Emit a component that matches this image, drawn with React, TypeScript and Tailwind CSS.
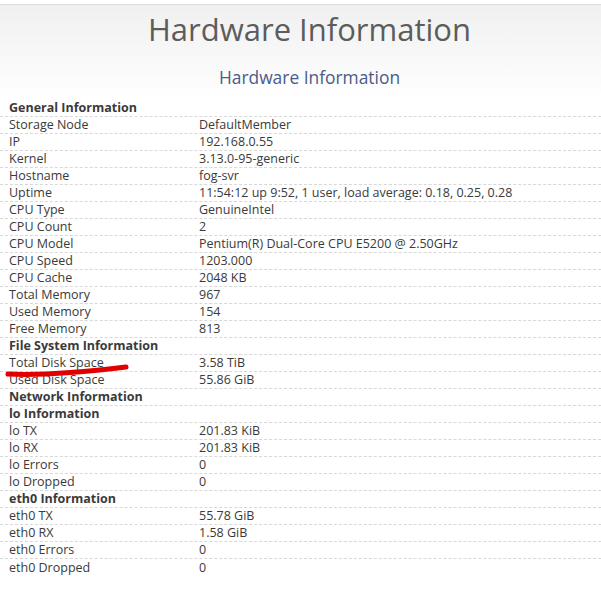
// Hardware Information — FOG server info page
import React from 'react'

type Row = { label: string; value?: string; head?: boolean }

const ROWS: Row[] = [
  { label: 'General Information', head: true },
  { label: 'Storage Node', value: 'DefaultMember' },
  { label: 'IP', value: '192.168.0.55' },
  { label: 'Kernel', value: '3.13.0-95-generic' },
  { label: 'Hostname', value: 'fog-svr' },
  { label: 'Uptime', value: '11:54:12 up 9:52, 1 user, load average: 0.18, 0.25, 0.28' },
  { label: 'CPU Type', value: 'GenuineIntel' },
  { label: 'CPU Count', value: '2' },
  { label: 'CPU Model', value: 'Pentium(R) Dual-Core CPU E5200 @ 2.50GHz' },
  { label: 'CPU Speed', value: '1203.000' },
  { label: 'CPU Cache', value: '2048 KB' },
  { label: 'Total Memory', value: '967' },
  { label: 'Used Memory', value: '154' },
  { label: 'Free Memory', value: '813' },
  { label: 'File System Information', head: true },
  { label: 'Total Disk Space', value: '3.58 TiB' },
  { label: 'Used Disk Space', value: '55.86 GiB' },
  { label: 'Network Information', head: true },
  { label: 'lo Information', head: true },
  { label: 'lo TX', value: '201.83 KiB' },
  { label: 'lo RX', value: '201.83 KiB' },
  { label: 'lo Errors', value: '0' },
  { label: 'lo Dropped', value: '0' },
  { label: 'eth0 Information', head: true },
  { label: 'eth0 TX', value: '55.78 GiB' },
  { label: 'eth0 RX', value: '1.58 GiB' },
  { label: 'eth0 Errors', value: '0' },
  { label: 'eth0 Dropped', value: '0' },
]

export default function App() {
  return (
    <div className="relative w-[601px] h-[592px] overflow-hidden bg-white font-['Open_Sans',sans-serif] text-[#3a3a3a]">
      <div className="mt-[4px] border-t border-[#dcdcdc] bg-gradient-to-b from-[#f0f0f0] to-white pl-[18px]">
        <h1 className="h-[52px] pt-[4px] text-center text-[31px] leading-[40px] text-[#5c5c5c]">
          Hardware Information
        </h1>
        <h2 className="h-[43px] pt-[8px] text-center text-[17.4px] leading-[24px] text-[#4b5b88]">
          Hardware Information
        </h2>
      </div>

      <div className="text-[12.5px] leading-[16px]">
        {ROWS.map((r, i) => (
          <div
            key={i}
            className={`flex h-[17px] items-center ${i < ROWS.length - 1 ? 'border-b border-dashed border-[#d8d8d8]' : ''}`}
          >
            <div className={`w-[199px] shrink-0 pl-[9px] ${r.head ? 'font-bold' : ''}`}>{r.label}</div>
            <div className="whitespace-nowrap">{r.value}</div>
          </div>
        ))}
      </div>

      {/* red marker underline */}
      <svg className="absolute left-0 top-0 pointer-events-none" width="601" height="592">
        <path
          d="M8 374 C 40 375.5, 85 372, 126 367"
          fill="none"
          stroke="#e00000"
          strokeWidth="5"
          strokeLinecap="round"
        />
      </svg>
    </div>
  )
}
